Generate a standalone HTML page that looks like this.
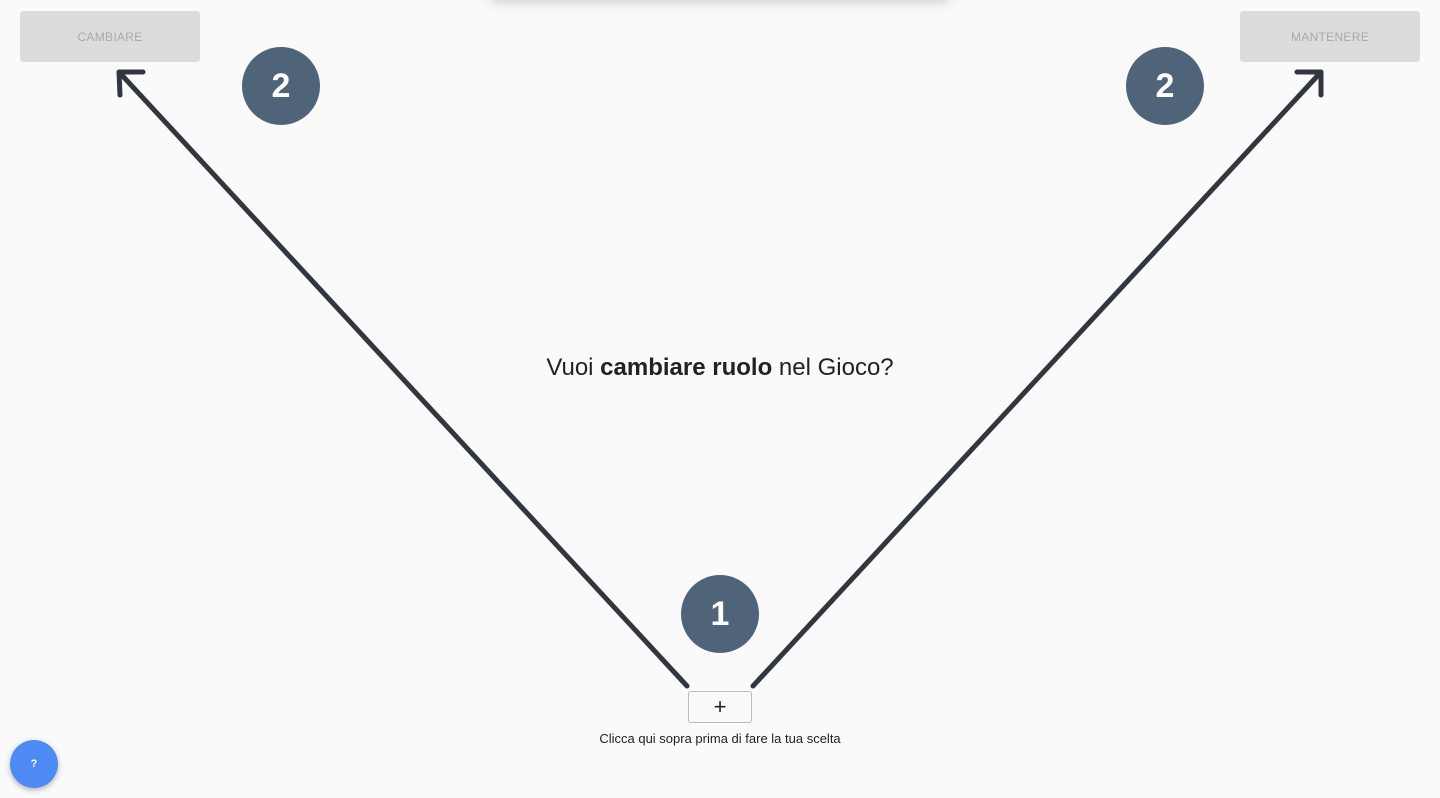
<!DOCTYPE html>
<html><head><meta charset="utf-8"><style>
body{margin:0;width:1440px;height:798px;background:#fafafa;font-family:"Liberation Sans",Roboto,sans-serif;position:relative;overflow:hidden}
.btn{position:absolute;top:11px;width:180px;height:51px;background:#dcdcdc;border-radius:3px;color:#a9a9a9;font-size:12px;display:flex;align-items:center;justify-content:center;letter-spacing:.3px}
.c{position:absolute;width:78px;height:78px;border-radius:50%;background:#4f6479;color:#fff;font-weight:bold;font-size:34px;display:flex;align-items:center;justify-content:center}
.top{position:absolute;left:490px;top:-20px;width:460px;height:20px;box-shadow:0 2px 12px rgba(0,0,0,.18);background:#fafafa}
</style></head><body>
<div class="top"></div>
<div class="btn" style="left:20px">CAMBIARE</div>
<div class="btn" style="left:1240px">MANTENERE</div>
<svg width="1440" height="798" style="position:absolute;left:0;top:0">
<g stroke="#31363f" stroke-width="5" stroke-linecap="round" fill="none" stroke-linejoin="round">
<path d="M687 686 L119 72 M143 72 L119 72 L120 95"/>
<path d="M753 686 L1321 72 M1297 72 L1321 72 L1321 95"/>
</g></svg>
<div class="c" style="left:242px;top:47px">2</div>
<div class="c" style="left:1126px;top:47px">2</div>
<div class="c" style="left:681px;top:575px">1</div>
<div style="position:absolute;left:0;width:1440px;top:354px;text-align:center;font-size:24px;color:#222;font-weight:400">Vuoi <b style="font-weight:700">cambiare ruolo</b> nel Gioco?</div>
<div style="position:absolute;left:688px;top:691px;width:62px;height:30px;border:1px solid #bbb;border-radius:3px;background:#fafafa;display:flex;align-items:center;justify-content:center;font-size:22px;color:#222">+</div>
<div style="position:absolute;left:0;width:1440px;top:731px;text-align:center;font-size:13px;color:#222">Clicca qui sopra prima di fare la tua scelta</div>
<div style="position:absolute;left:10px;top:740px;width:48px;height:48px;border-radius:50%;background:#4e8af5;color:#fff;font-size:11px;font-weight:bold;display:flex;align-items:center;justify-content:center;box-shadow:0 2px 6px rgba(0,0,0,.3)">?</div>
</body></html>
